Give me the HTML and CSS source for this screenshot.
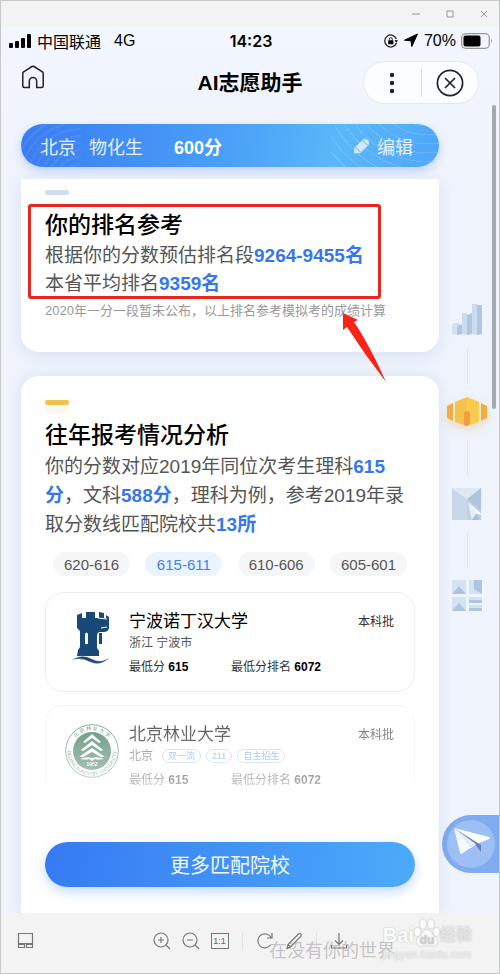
FILE: index.html
```html
<!DOCTYPE html>
<html lang="zh-CN">
<head>
    <meta charset="UTF-8">
    <meta name="viewport" content="width=device-width, initial-scale=1.0">
    <title>AI志愿助手</title>
    <link rel="stylesheet" href="styles.css">
</head>
<body>
    <div class="titlebar">
        <button type="button" aria-label="最小化"><svg width="10" height="10" viewBox="0 0 10 10"><path d="M1 5h8"/></svg></button>
        <button type="button" aria-label="最大化"><svg width="10" height="10" viewBox="0 0 10 10"><path d="M2 2h6v6H2z"/></svg></button>
        <button type="button" aria-label="关闭"><svg width="10" height="10" viewBox="0 0 10 10"><path d="M2 2l6 6M8 2l-6 6"/></svg></button>
    </div>

    <div class="screen">
        <div class="statusbar">
            <div class="status-left">
                <svg width="23" height="14" viewBox="0 0 23 14"><rect x="0" y="9" width="4" height="5" rx="1"/><rect x="6" y="7" width="4" height="7" rx="1"/><rect x="12" y="4" width="4" height="10" rx="1"/><rect x="18" y="0" width="4" height="14" rx="1"/></svg>
                <span>中国联通</span>
                <span class="network">4G</span>
            </div>
            <div class="time">14:23</div>
            <div class="status-right">
                <svg width="14" height="14" viewBox="0 0 14 14"><path d="M12.4 5A6 6 0 1 0 12.400 9" fill="none" stroke="#222" stroke-width="1.300"/><path d="M10.500 6.200h3.500l-1.700 2.600z"/><rect x="4.200" y="6.300" width="5.200" height="4" rx=".6"/><path d="M5.300 6.500V5.200a1.500 1.500 0 0 1 3 0v1.300" fill="none" stroke="#222"/></svg>
                <svg width="16" height="13" viewBox="-1 0 16 13"><path d="M13.500 0L7.800 12.500 7 6.800.5 6.200z" stroke="#000"/></svg>
                <span>70%</span>
                <svg width="32" height="16" viewBox="0 0 32 16"><rect x=".7" y=".7" width="27.600" height="14.600" rx="4" fill="none" stroke="#999" stroke-width="1.300"/><rect x="2.500" y="2.500" width="17" height="11" rx="2"/><path d="M30 5.500q1.800 2.500 0 5z" fill="#888"/></svg>
            </div>
        </div>

        <header class="navbar">
            <a class="home" href="#" aria-label="首页">
                <svg width="24" height="24" viewBox="0 0 24 24"><path d="M1.800 8.200Q1.800 7.400 2.600 6.900L11 1.500q1-.6 2 0l8.400 5.400q.8.500.8 1.300V21q0 1.500-1.500 1.500h-5v-6.300a3.700 3.700 0 0 0-7.400 0v6.300h-5q-1.500 0-1.500-1.500z"/></svg>
            </a>
            <h1>AI志愿助手</h1>
            <div class="capsule">
                <button type="button" aria-label="更多"><svg width="28" height="28" viewBox="0 0 28 28"><circle cx="14" cy="6" r="2.200" fill="#222"/><circle cx="14" cy="14" r="2.200" fill="#222"/><circle cx="14" cy="22" r="2.200" fill="#222"/></svg></button>
                <button type="button" aria-label="关闭小程序"><svg width="28" height="28" viewBox="0 0 28 28" fill="none" stroke="#222" stroke-width="1.700"><circle cx="14" cy="14" r="12.600"/><path d="M9 9l10 10M19 9L9 19"/></svg></button>
            </div>
        </header>

        <div class="profile">
            <span>北京</span>
            <span>物化生</span>
            <strong>600分</strong>
            <button type="button">
                <svg width="16" height="16" viewBox="0 0 16 16"><path d="M0 14.500l.5-5L9 1.500q2-1.500 4 0l1.500 1.500q1.500 2 0 4L6.500 15l-5 .5q-1.500 0-1.500-1z" fill="#cfe9ff"/><path d="M1.500 9L7 14.500M8.700 2.300l5 5" stroke="#58b0f8"/></svg>
                编辑
            </button>
        </div>

        <div class="content">
            <main>
                <section class="card rank">
                    <i class="mark"></i>
                    <h2>你的排名参考</h2>
                    <p class="text">根据你的分数预估排名段<b>9264-9455名</b><br>本省平均排名<b>9359名</b></p>
                    <p class="note">2020年一分一段暂未公布，以上排名参考模拟考的成绩计算</p>
                    <div class="highlight"></div>
                    <svg class="arrow" width="46" height="72" viewBox="0 0 46 72"><path d="M1 1l15 7-4 2Q27 32 44 70 23 43 5 15L1 18z"/></svg>
                </section>

                <section class="card history">
                    <i class="mark mark-gold"></i>
                    <h2>往年报考情况分析</h2>
                    <p class="text">你的分数对应2019年同位次考生理科<b>615分</b>，文科<b>588分</b>，理科为例，参考2019年录取分数线匹配院校共<b>13所</b></p>

                    <div class="chips">
                        <button type="button">620-616</button>
                        <button type="button" class="active">615-611</button>
                        <button type="button">610-606</button>
                        <button type="button">605-601</button>
                    </div>

                    <div class="schools">
                        <article class="school">
                            <svg class="logo" width="54" height="58" viewBox="0 0 54 58" fill="#194978">
                                <path d="M12 5l5-2v5h4V2h9v6h4V2l5 1v5h2V5l3 2v11q-1 4-5 4h-5q-2 1-2 4v12l2 3v5H12l1-6 2-3V21l-3-3z"/>
                                <path d="M20 24q1.500-3 3 0v10h-3z" fill="#fff"/>
                                <path d="M33 8l9 1M36 18l6-1" stroke="#fff" fill="none"/>
                                <path d="M34 23h3v11h-3z"/>
                                <path d="M7 50q10-7 20-1 9 5 18-2-9 10-20 5-9-5-18-2z" stroke="#fff" stroke-width=".4"/>
                            </svg>
                            <div class="info">
                                <div class="row"><h3>宁波诺丁汉大学</h3><span class="batch">本科批</span></div>
                                <div class="place">浙江 宁波市</div>
                                <div class="scores"><span>最低分 <b>615</b></span><span>最低分排名 <b>6072</b></span></div>
                            </div>
                        </article>
                        <article class="school faded">
                            <svg class="logo" width="54" height="58" viewBox="0 0 54 58">
                                <circle cx="27" cy="28" r="26.300" fill="none" stroke="#19623f" stroke-width=".8"/>
                                <circle cx="27" cy="28" r="19" fill="#19623f"/>
                                <path d="M27 11l9 8-2 1-7-5-7 5-2-1zM27 18l11 9-2 1-9-6-9 6-2-1zM27 25l13 9h-4l-9-5-9 5h-4zM15 36q6-3 12-1 6-2 12 1-6 1-9 0l-3 2-3-2q-3 1-9 0z" fill="#fff"/>
                                <path id="ring-top" d="M6 28a21 21 0 0 1 42 0" fill="none"/>
                                <path id="ring-bottom" d="M3 23a24.500 24.500 0 1 0 48 0" fill="none"/>
                                <text class="logo-cn"><textPath href="#ring-top" startOffset="50%">北 京 林 业 大 学</textPath></text>
                                <text class="logo-en"><textPath href="#ring-bottom" startOffset="50%">BEIJING FORESTRY UNIVERSITY</textPath></text>
                                <text class="logo-year" x="27" y="43">1952</text>
                            </svg>
                            <div class="info">
                                <div class="row"><h3>北京林业大学</h3><span class="batch">本科批</span></div>
                                <div class="place">北京 <span class="tags"><span class="tag">双一流</span><span class="tag">211</span><span class="tag">自主招生</span></span></div>
                                <div class="scores"><span>最低分 <b>615</b></span><span>最低分排名 <b>6072</b></span></div>
                            </div>
                        </article>
                    </div>

                    <button type="button" class="more-btn">更多匹配院校</button>
                </section>
            </main>

            <aside>
                <nav class="rail">
                    <a href="#" aria-label="排名">
                        <svg width="32" height="32" viewBox="0 0 32 32"><path d="M1 20l5 2v9l-5-1z" fill="#d2e0f0"/><path d="M6 22l5-2v10l-5 1zM16 11l5-2v21l-5 1zM26 1h5v29l-5 1z" fill="#b2c6df"/><path d="M1 20l5-1 5 1-5 2zM11 9h5v22l-5-1zM21 0h5v31l-5-1z" fill="#ccdcef"/></svg>
                    </a>
                    <a href="#" aria-label="往年分析" class="current">
                        <svg width="40" height="32" viewBox="0 0 40 32"><path d="M0 10l6-3v18l-6-3zM40 10l-6-3v18l6-3z" fill="#f1ac43"/><path d="M8 6L20 1v29L8 26z" fill="#f5c24e"/><path d="M20 1l12 5v20l-12 4z" fill="#f8ca4d"/><path d="M7 6v20M33 6v20" stroke="#fff0c7" stroke-width="1.300"/><path d="M17 29V18q0-3 3-3t3 3v10l-3 2z" fill="#ef9e42"/></svg>
                    </a>
                    <a href="#" aria-label="志愿推荐">
                        <svg width="34" height="32" viewBox="0 0 34 34"><path d="M1 0h31v34H1z" fill="#c8d8ea"/><path d="M1 0h31L17 12z" fill="#dce9f5"/><path d="M32 0v24L17 12z" fill="#b1c4dd"/><path d="M17 12l15 12v10H17z" fill="#bdd0e6"/><path d="M18 15l16 14-7-2z" fill="#fff"/><path d="M18 15l4 19 5-7z" fill="#e6eff9"/><path d="M22 34l5-7 3 7z" fill="#a9bfda"/></svg>
                    </a>
                    <a href="#" aria-label="全部工具">
                        <svg width="32" height="32" viewBox="0 0 32 32"><path d="M1 0h14v14H1zM1 17h14v14H1zM18 0h13v14H18zM18 17h13v6H18zM18 25h13v6H18z" fill="#d4e3f1"/><path d="M1 14l7-8 7 8zM1 31l7-8 7 8zM23 0h8v14l-8-5zM18 20h13v3H18zM18 28h13v3H18z" fill="#afc4de"/></svg>
                    </a>
                </nav>
                <button type="button" class="send" aria-label="分享">
                    <svg width="50" height="50" viewBox="0 0 50 50"><circle cx="25" cy="25" r="24" fill="#9dbff3"/><path d="M8 9l35 9q2 1 0 2l-12 5z" fill="#fff"/><path d="M8 9l6 25q1 2 3 0l12-8z" fill="#f4f8ff"/><path d="M8 9l27 17v7l-6-8z" fill="#6482be"/><path d="M8 9l22 16-5 4z" fill="#e2ebfa"/></svg>
                </button>
            </aside>
        </div>
        <div class="scrollbar"></div>
    </div>

    <footer class="toolbar">
        <button type="button" aria-label="缩略图"><svg width="18" height="18" viewBox="0 0 18 18"><path d="M1.500 1.500h14v10h-14zM1.500 12.500h6v3h-6zM9.500 12.500h6v3h-6z"/></svg></button>
        <div class="tools">
            <button type="button" aria-label="放大"><svg width="18" height="18" viewBox="0 0 18 18"><circle cx="8" cy="8" r="7"/><path d="M13 13l4 4M5 8h6M8 5v6"/></svg></button>
            <button type="button" aria-label="缩小"><svg width="18" height="18" viewBox="0 0 18 18"><circle cx="8" cy="8" r="7"/><path d="M13 13l4 4M5 8h6"/></svg></button>
            <button type="button" class="actual">1:1</button>
            <i></i>
            <button type="button" aria-label="旋转"><svg width="18" height="18" viewBox="0 0 18 18"><path d="M14.500 13A7 7 0 1 1 15 5.500M16 1v5h-5"/></svg></button>
            <button type="button" aria-label="编辑图片"><svg width="18" height="18" viewBox="0 0 18 18"><path d="M2 16.500l1-4L13.500 2q1.200-1 2.300 0t0 2.300L5.500 15zM3 12.500L5.500 15"/></svg></button>
            <i></i>
            <button type="button" aria-label="下载"><svg width="18" height="18" viewBox="0 0 18 18"><path d="M9 1v11M5 8.500l4 4 4-4M1.500 13v3h15v-3"/></svg></button>
        </div>
        <span class="caption">在没有你的世界</span>
        <div class="watermark">
            <div class="brand">
                <span>Bai</span>
                <svg width="26" height="28" viewBox="0 0 26 28"><ellipse cx="3.500" cy="13" rx="3" ry="4"/><ellipse cx="9" cy="5" rx="3" ry="4.500"/><ellipse cx="17" cy="5" rx="3" ry="4.500"/><ellipse cx="22.500" cy="13" rx="3" ry="4"/><path d="M13 11c4 0 5 5 8 7 4 3 2 9-2 9-3 0-4-1-6-1s-3 1-6 1c-4 0-6-6-2-9 3-2 4-7 8-7z"/><text x="13" y="25">du</text></svg>
                <span class="brand-cn">经验</span>
            </div>
            <div class="site">jingyan.baidu.com</div>
        </div>
    </footer>
</body>
</html>
```

FILE: styles.css
```css
* {
    box-sizing: border-box;
}
body {
    margin: 0;
    min-height: 100vh;
    display: flex;
    flex-direction: column;
    border: 1px solid #c6c8cc;
    background-color: #f3f3f3;
    color: #000;
    font-family: "Liberation Sans", "Noto Sans CJK SC", sans-serif;
}
h1, h2, h3, p {
    margin: 0;
}
button {
    margin: 0;
    padding: 0;
    border: none;
    background: none;
    color: inherit;
    font-family: inherit;
    cursor: pointer;
}
svg {
    display: block;
}

/* window */
.titlebar {
    height: 26px;
    display: flex;
    justify-content: flex-end;
    align-items: center;
    gap: 24px;
    padding-right: 10px;
}
.titlebar svg {
    fill: none;
    stroke: #999;
}
.screen {
    position: relative;
    flex: 1;
    display: flex;
    flex-direction: column;
    background: linear-gradient(#f2f6fe, #eef3fc 160px);
}

/* status bar and header */
.statusbar {
    height: 27px;
    display: grid;
    grid-template-columns: 1fr auto 1fr;
    align-items: center;
    padding: 0 6px 0 8px;
    font-size: 16px;
}
.status-left, .status-right {
    display: flex;
    align-items: center;
    gap: 5px;
}
.status-right {
    justify-content: flex-end;
}
.network {
    margin-left: 8px;
}
.time {
    font-family: Inter, sans-serif;
    font-weight: 600;
}
.navbar {
    display: grid;
    grid-template-columns: 1fr auto 1fr;
    padding: 7px 20px 20px;
}
.home {
    height: 32px;
    display: flex;
    align-items: center;
}
.home svg {
    fill: none;
    stroke: #222;
    stroke-width: 1.5px;
}
.navbar h1 {
    font-size: 21px;
    line-height: 43px;
    font-weight: bold;
}
.capsule {
    justify-self: end;
    width: 116px;
    height: 43px;
    display: flex;
    align-items: center;
    border: 1px solid #e4e9f1;
    border-radius: 22px;
    background-color: #fbfdff;
}
.capsule button {
    flex: 1;
    display: flex;
    justify-content: center;
}
.capsule button + button {
    border-left: 1px solid #d5dae2;
}

.profile {
    position: relative;
    height: 43px;
    margin: 0 60px 0 20px;
    padding: 0 26px 0 19px;
    display: flex;
    align-items: center;
    gap: 13px;
    border-radius: 22px;
    background:
        repeating-radial-gradient(circle at 90% -120%, transparent 0 8px, rgba(255,255,255,0.14) 8px 9px) right / 108px 100% no-repeat,
        repeating-radial-gradient(circle at 100% 140%, transparent 0 5px, rgba(255,255,255,0.06) 5px 7px) left / 60px 100% no-repeat,
        linear-gradient(100deg, #3a7cf2, #4aa0f7 50%, #5cb7f9 75%, #4ea7f8);
    box-shadow: 0 4px 10px rgba(74,130,245,0.3);
    color: #e5f1ff;
    font-size: 18px;
}
.profile strong {
    margin-left: 18px;
    color: #fff;
}
.profile button {
    margin-left: auto;
    display: flex;
    align-items: center;
    gap: 7px;
    font-size: 18px;
}

/* cards */
.content {
    flex: 1;
    display: grid;
    grid-template-columns: 1fr 60px;
    padding: 12px 0 0 20px;
}
.card {
    position: relative;
    padding: 24px;
    border-radius: 18px;
    background-color: #fff;
    box-shadow: 0 4px 14px rgba(80,115,185,0.12);
}
.rank {
    margin-bottom: 24px;
    padding: 11px 24px 31px;
    border-radius: 0 0 18px 18px;
}
.history {
    padding-bottom: 26px;
    border-radius: 18px 18px 0 0;
    box-shadow: 0 0 14px rgba(80,115,185,0.12);
    clip-path: inset(-20px -20px 0);
}
.mark {
    display: block;
    width: 24px;
    height: 5px;
    margin-bottom: 14px;
    border-radius: 2px;
    background-color: #d0dfef;
}
.mark-gold {
    background-color: #f0c254;
    box-shadow: 0 4px 8px rgba(240,160,84,0.25);
}
.card h2 {
    font-size: 23px;
    line-height: 32px;
    font-weight: 500;
}
.text {
    margin-top: 1px;
    color: #555;
    font-size: 19px;
    line-height: 28px;
}
.history .text {
    line-height: 29px;
}
.text b {
    color: #3577ee;
}
.note {
    margin-top: 3px;
    color: #999;
    font-size: 13px;
    line-height: 20px;
}

/* red frame and pointer drawn over the rank card */
.highlight {
    position: absolute;
    top: 25px;
    left: 7px;
    width: 353px;
    height: 95px;
    border: 3px solid #e8271e;
    border-radius: 3px;
}
.arrow {
    position: absolute;
    top: 133px;
    left: 321px;
    z-index: 1;
    fill: #fb2318;
}

.chips {
    margin: 13px 0 16px;
    padding: 0 8px;
    display: flex;
    justify-content: space-between;
}
.chips button {
    width: 77px;
    height: 24px;
    border-radius: 12px;
    background-color: #f5f6f8;
    color: #555;
    font-size: 15px;
}
.chips .active {
    background-color: #eaf4ff;
    color: #4180f0;
}

.schools {
    display: grid;
    gap: 13px;
}
.school {
    min-height: 100px;
    display: flex;
    gap: 10px;
    padding: 17px 20px 11px 19px;
    border: 1px solid #eeeff1;
    border-radius: 18px;
}
.faded {
    -webkit-mask-image: linear-gradient(rgba(0,0,0,0.75), rgba(0,0,0,0.35) 75%, transparent);
    mask-image: linear-gradient(rgba(0,0,0,0.75), rgba(0,0,0,0.35) 75%, transparent);
}
.info {
    flex: 1;
    color: #333;
    font-size: 12px;
    line-height: 18px;
}
.row {
    display: flex;
    justify-content: space-between;
    align-items: center;
}
.row h3 {
    color: #000;
    font-size: 17px;
    line-height: 24px;
    font-weight: normal;
}
.place {
    display: flex;
    align-items: center;
    gap: 9px;
    margin-bottom: 6px;
    color: #555;
}
.tags {
    display: flex;
    gap: 5px;
}
.tag {
    padding: 0 5px;
    border: 1px solid #a5c7ff;
    border-radius: 8px;
    color: #4f8cf5;
    font-size: 9px;
    line-height: 12px;
}
.scores {
    display: grid;
    grid-template-columns: 102px 1fr;
}
.scores b {
    color: #000;
}
.logo-cn, .logo-en, .logo-year {
    text-anchor: middle;
    fill: #19623f;
    font-size: 5px;
}
.logo-en {
    font-family: "Liberation Serif", serif;
}
.logo-year {
    fill: #fff;
    font-weight: bold;
}

.more-btn {
    display: block;
    width: 100%;
    height: 45px;
    margin-top: 37px;
    border-radius: 23px;
    background: linear-gradient(100deg, #367af3, #4cabfa);
    box-shadow: 0 5px 12px rgba(64,135,245,0.3);
    color: #f2f8ff;
    font-size: 20px;
}

/* right side */
aside {
    display: flex;
    flex-direction: column;
    justify-content: space-between;
}
.rail {
    display: flex;
    flex-direction: column;
    align-items: center;
    padding: 125px 4px 0 0;
}
.rail a + a::before {
    content: "";
    display: block;
    width: 1px;
    height: 36px;
    margin: 12px auto;
    background-color: #dfe6f1;
}
.current svg {
    filter: drop-shadow(0 4px 4px rgba(240,160,70,0.3));
}
.send {
    align-self: flex-end;
    width: 57px;
    height: 58px;
    margin-bottom: 41px;
    padding-left: 4px;
    border-radius: 29px 0 0 29px;
    background-color: #7fabf0;
}
.scrollbar {
    position: absolute;
    top: 78px;
    right: 3px;
    width: 4px;
    height: 304px;
    border-radius: 2px;
    background-color: #a3a8b1;
}

/* viewer toolbar */
.toolbar {
    position: relative;
    height: 59px;
    display: grid;
    grid-template-columns: 1fr auto 1fr;
    align-items: center;
    padding: 0 16px 5px;
}
.toolbar > button {
    justify-self: start;
}
.toolbar button svg {
    fill: none;
    stroke: #777;
    stroke-width: 1.2px;
}
.tools {
    display: flex;
    align-items: center;
    gap: 11px;
}
.tools i {
    width: 1px;
    height: 18px;
    margin: 0 2px;
    background-color: #e2e2e2;
}
.tools .actual {
    width: 18px;
    height: 16px;
    border: 1px solid #777;
    color: #666;
    font-size: 9px;
    line-height: 14px;
}
.caption {
    position: absolute;
    top: 24px;
    left: 268px;
    color: rgba(120,120,120,0.4);
    font-size: 18px;
    line-height: 26px;
}
.watermark {
    position: absolute;
    top: 5px;
    right: 27px;
    color: #fafafa;
    text-shadow: 0 0 2px #bbb;
}
.brand {
    display: flex;
    align-items: flex-end;
    font-size: 20px;
    line-height: 24px;
    font-weight: bold;
}
.brand svg {
    fill: #fafafa;
    filter: drop-shadow(0 0 1px #bbb);
}
.brand text {
    fill: #ccc;
    font-size: 12px;
    text-anchor: middle;
}
.brand-cn {
    color: #e6e6e6;
    font-size: 16px;
}
.site {
    color: #eee;
    font-size: 11px;
    line-height: 14px;
}
```
